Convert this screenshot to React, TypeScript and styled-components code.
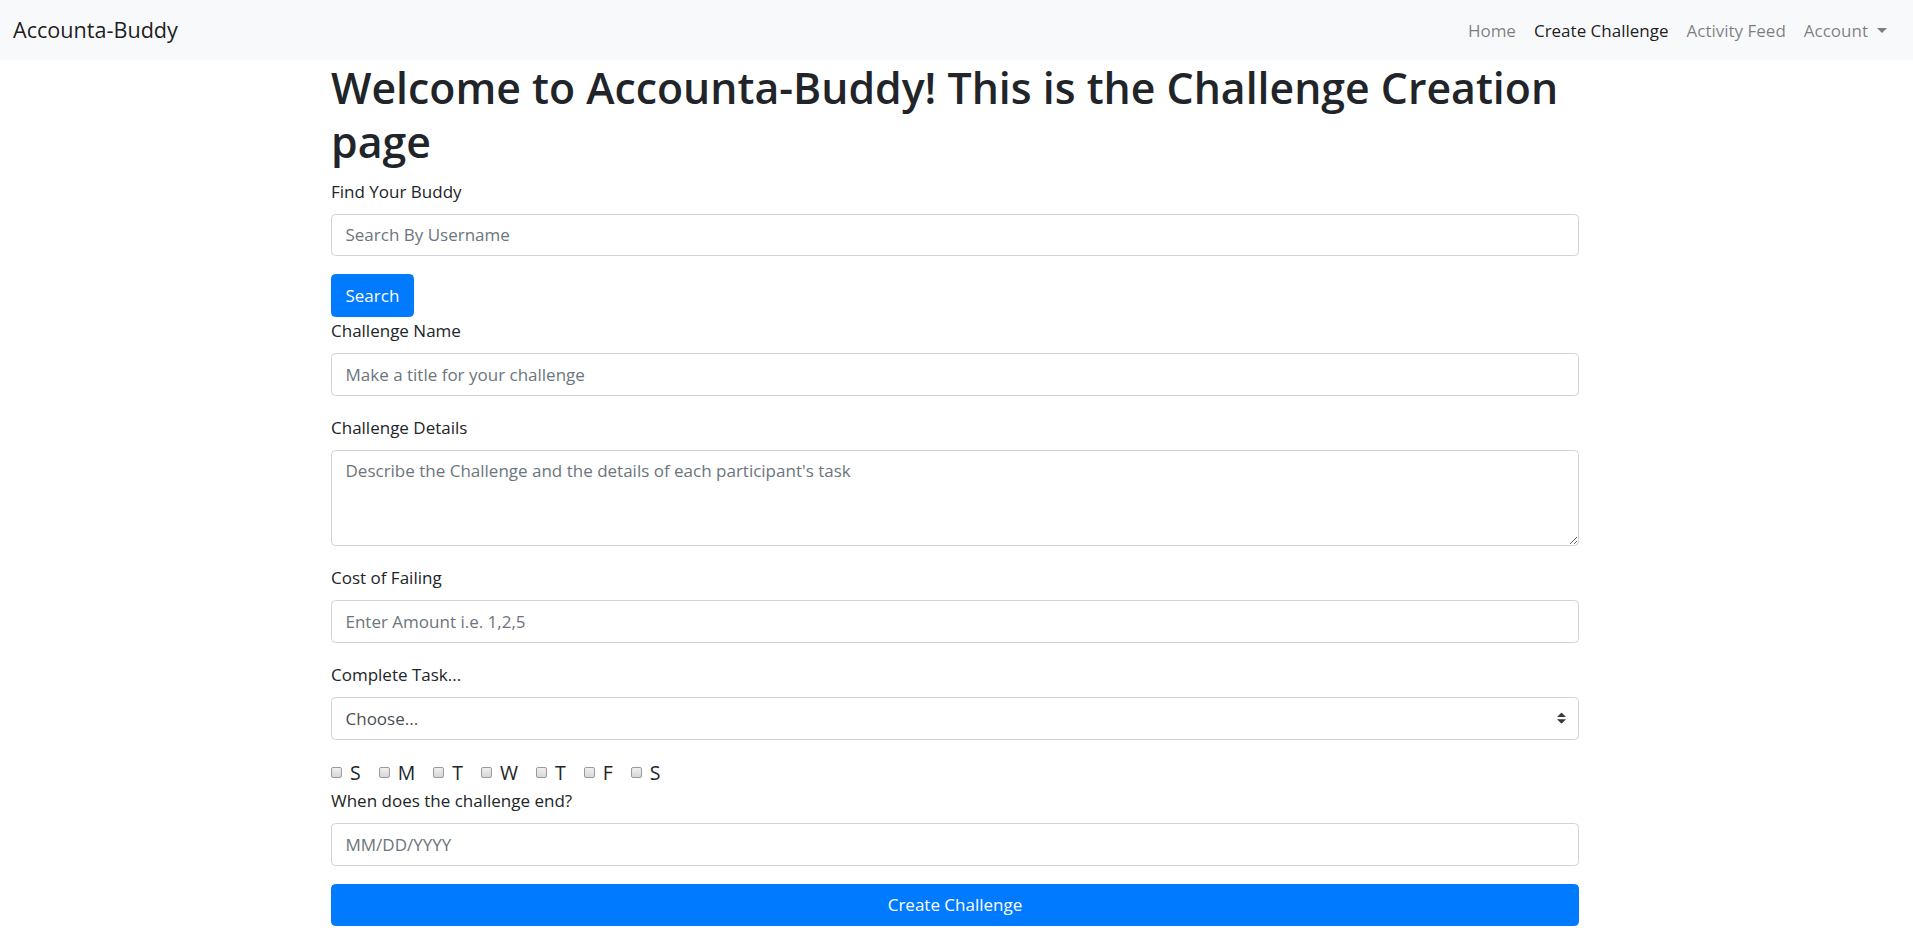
import React from "react";
import styled, { createGlobalStyle } from "styled-components";

const GlobalStyle = createGlobalStyle`
  *, *::before, *::after { box-sizing: border-box; }
  html, body { margin: 0; padding: 0; background: #fff; }
  body {
    font-family: "Open Sans", "Noto Sans", Arial, sans-serif;
    font-size: 17px;
    line-height: 27px;
    color: #212529;
  }
`;

const Navbar = styled.nav`
  height: 60px;
  background: #f8f9fa;
  display: flex;
  align-items: center;
  justify-content: space-between;
  padding: 0 17px 0 13px;
`;

const Brand = styled.a`
  font-size: 21.6px;
  line-height: 34px;
  color: rgba(0, 0, 0, 0.9);
  text-decoration: none;
`;

const NavList = styled.ul`
  display: flex;
  list-style: none;
  margin: 0;
  padding: 0;
`;

const NavLink = styled.a<{ $active?: boolean }>`
  display: flex;
  align-items: center;
  padding: 0 9px;
  font-size: 17px;
  line-height: 27px;
  color: ${(p) => (p.$active ? "rgba(0,0,0,0.9)" : "rgba(0,0,0,0.5)")};
  text-decoration: none;
`;

const Caret = styled.span`
  display: inline-block;
  margin-left: 9px;
  width: 0;
  height: 0;
  border-top: 5.4px solid;
  border-left: 5.4px solid transparent;
  border-right: 5.4px solid transparent;
`;

const Container = styled.main`
  width: 1248px;
  margin-left: calc(50% - 625.5px);
`;

const Title = styled.h1`
  margin: 0.5px 0 9px;
  font-size: 42.8px;
  line-height: 54px;
  font-weight: 600;
  color: #212529;
`;

const FormGroup = styled.div`
  margin-bottom: 18px;
`;

const Label = styled.label`
  display: block;
  margin-bottom: 9px;
`;

const fieldStyles = `
  display: block;
  width: 100%;
  padding: 6.75px 13.5px;
  font-family: inherit;
  font-size: 17px;
  line-height: 27px;
  color: #495057;
  background: #fff;
  border: 1px solid #ced4da;
  border-radius: 4.5px;
  outline: none;
  &::placeholder { color: #6c757d; opacity: 1; }
`;

const Input = styled.input`
  ${fieldStyles}
  height: 42.75px;
`;

const TextArea = styled.textarea`
  ${fieldStyles}
  height: 96.5px;
  resize: vertical;
`;

const SelectWrap = styled.div`
  position: relative;
`;

const Select = styled.select`
  ${fieldStyles}
  height: 42.75px;
  appearance: none;
  -webkit-appearance: none;
  padding-right: 36px;
`;

const SelectArrow = styled.svg`
  position: absolute;
  right: 13.5px;
  top: 50%;
  width: 9px;
  height: 11.25px;
  transform: translateY(-50%);
  pointer-events: none;
`;

const Button = styled.button<{ $block?: boolean }>`
  display: ${(p) => (p.$block ? "block" : "inline-block")};
  width: ${(p) => (p.$block ? "100%" : "auto")};
  padding: 6.75px 13.5px;
  font-family: inherit;
  font-size: 17px;
  line-height: 27px;
  color: #fff;
  background: #007bff;
  border: 1px solid #007bff;
  border-radius: 4.5px;
  cursor: pointer;
  text-align: center;
`;

const DaysRow = styled.div`
  display: flex;
  align-items: center;
  height: 29.3px;
`;

const DayItem = styled.label`
  display: flex;
  align-items: center;
  gap: 8px;
  margin-right: 18px;
  font-size: 19.5px;
  line-height: 27px;
`;

const DayBox = styled.input`
  appearance: none;
  -webkit-appearance: none;
  width: 11px;
  height: 11px;
  margin: 0;
  border: 1px solid #9a9a9a;
  border-radius: 2px;
  background: linear-gradient(#f0f0f0, #d6d6d6);
`;

const days = ["S", "M", "T", "W", "T", "F", "S"];

export default function App() {
  return (
    <>
      <GlobalStyle />
      <Navbar>
        <Brand href="#">Accounta-Buddy</Brand>
        <NavList>
          <li><NavLink href="#">Home</NavLink></li>
          <li><NavLink href="#" $active>Create Challenge</NavLink></li>
          <li><NavLink href="#">Activity Feed</NavLink></li>
          <li>
            <NavLink href="#">
              Account<Caret />
            </NavLink>
          </li>
        </NavList>
      </Navbar>
      <Container>
        <Title>Welcome to Accounta-Buddy! This is the Challenge Creation page</Title>
        <FormGroup>
          <Label>Find Your Buddy</Label>
          <Input placeholder="Search By Username" />
        </FormGroup>
        <Button>Search</Button>
        <FormGroup>
          <Label>Challenge Name</Label>
          <Input placeholder="Make a title for your challenge" />
        </FormGroup>
        <FormGroup>
          <Label>Challenge Details</Label>
          <TextArea placeholder="Describe the Challenge and the details of each participant's task" />
        </FormGroup>
        <FormGroup>
          <Label>Cost of Failing</Label>
          <Input placeholder="Enter Amount i.e. 1,2,5" />
        </FormGroup>
        <FormGroup>
          <Label>Complete Task...</Label>
          <SelectWrap>
            <Select defaultValue="">
              <option value="">Choose...</option>
              <option>Daily</option>
              <option>Weekly</option>
            </Select>
            <SelectArrow viewBox="0 0 4 5">
              <path fill="#343a40" d="M2 0L0 2h4zm0 5L0 3h4z" />
            </SelectArrow>
          </SelectWrap>
        </FormGroup>
        <DaysRow>
          {days.map((d, i) => (
            <DayItem key={i}>
              <DayBox type="checkbox" />
              {d}
            </DayItem>
          ))}
        </DaysRow>
        <FormGroup>
          <Label>When does the challenge end?</Label>
          <Input placeholder="MM/DD/YYYY" />
        </FormGroup>
        <Button $block>Create Challenge</Button>
      </Container>
    </>
  );
}
